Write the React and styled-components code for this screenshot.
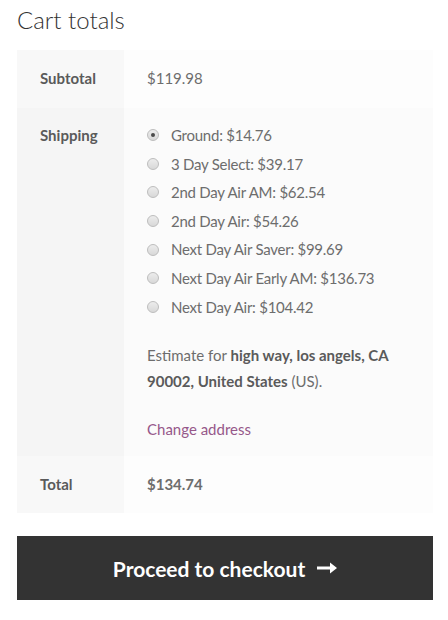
import React from 'react';
import styled, { createGlobalStyle } from 'styled-components';

const GlobalStyle = createGlobalStyle`
  body {
    margin: 0;
    background: #ffffff;
    font-family: 'Lato', 'Liberation Sans', sans-serif;
    color: #6d6d6d;
  }
`;

const Wrap = styled.div`
  padding: 0 15px 0 17px;
`;

const Heading = styled.h2`
  margin: 0;
  padding-top: 4px;
  height: 46px;
  font-family: 'Lato', sans-serif;
  font-weight: 300;
  font-size: 24px;
  line-height: 32px;
  color: #333333;
`;

const Row = styled.div`
  display: grid;
  grid-template-columns: 107px 1fr;
`;

const Label = styled.div`
  background: ${(p) => (p.$alt ? '#f5f5f5' : '#f8f8f8')};
  padding: ${(p) => p.$pad || '14px 0 16px 23px'};
  font-weight: 700;
  font-size: 15px;
  line-height: ${(p) => p.$lh || '28px'};
  color: #5a5a5a;
`;

const Value = styled.div`
  background: ${(p) => p.$bg || '#fdfdfd'};
  padding: ${(p) => p.$pad || '14px 23px 16px'};
  font-size: 15px;
  line-height: 28px;
  font-weight: ${(p) => (p.$bold ? 700 : 400)};
  color: #6d6d6d;
`;

const Methods = styled.ul`
  list-style: none;
  margin: 0;
  padding: 0;
`;

const Method = styled.li`
  display: flex;
  align-items: center;
  line-height: 28.6px;
  font-size: 15px;
  letter-spacing: -0.25px;
`;

const Radio = styled.span`
  width: 12px;
  height: 12px;
  box-sizing: border-box;
  border-radius: 50%;
  border: 1px solid #bdbdbd;
  background: linear-gradient(#ececec, #d8d8d8);
  margin-right: 12px;
  display: inline-flex;
  align-items: center;
  justify-content: center;
  flex: none;
  &::after {
    content: '';
    width: 4px;
    height: 4px;
    border-radius: 50%;
    background: ${(p) => (p.$checked ? '#4a4a4a' : 'transparent')};
  }
`;

const Estimate = styled.p`
  margin: 21px 0 0;
  font-size: 15px;
  line-height: 26px;
  strong {
    color: #5a5a5a;
  }
`;

const ChangeLink = styled.a`
  display: block;
  margin-top: 22px;
  line-height: 26px;
  font-size: 15px;
  color: #96588a;
  text-decoration: none;
`;

const CheckoutButton = styled.a`
  display: flex;
  align-items: center;
  justify-content: center;
  gap: 12px;
  margin-top: 23px;
  height: 64px;
  background: #333333;
  color: #ffffff;
  font-weight: 700;
  font-size: 21px;
  text-decoration: none;
`;

const methods = [
  ['Ground', '$14.76', true],
  ['3 Day Select', '$39.17'],
  ['2nd Day Air AM', '$62.54'],
  ['2nd Day Air', '$54.26'],
  ['Next Day Air Saver', '$99.69'],
  ['Next Day Air Early AM', '$136.73'],
  ['Next Day Air', '$104.42'],
];

export default function App() {
  return (
    <Wrap>
      <GlobalStyle />
      <Heading>Cart totals</Heading>
      <Row>
        <Label>Subtotal</Label>
        <Value>$119.98</Value>
      </Row>
      <Row>
        <Label $alt $pad="13px 0 0 23px" $lh="28.6px">Shipping</Label>
        <Value $bg="#fbfbfb" $pad="13px 23px 14px">
          <Methods>
            {methods.map(([name, price, checked]) => (
              <Method key={name}>
                <Radio $checked={checked} />
                {name}: {price}
              </Method>
            ))}
          </Methods>
          <Estimate>
            Estimate for <strong>high way, los angels, CA</strong>{' '}
            <strong>90002, United States</strong> (US).
          </Estimate>
          <ChangeLink href="#">Change address</ChangeLink>
        </Value>
      </Row>
      <Row>
        <Label $pad="14px 0 15px 23px">Total</Label>
        <Value $bold $pad="14px 23px 15px">$134.74</Value>
      </Row>
      <CheckoutButton href="#">
        Proceed to checkout
        <svg width="20" height="12" viewBox="0 0 20 12">
          <path d="M0 4.5h13V0.5L20 6l-7 5.5V7.5H0z" fill="#ffffff" />
        </svg>
      </CheckoutButton>
    </Wrap>
  );
}
